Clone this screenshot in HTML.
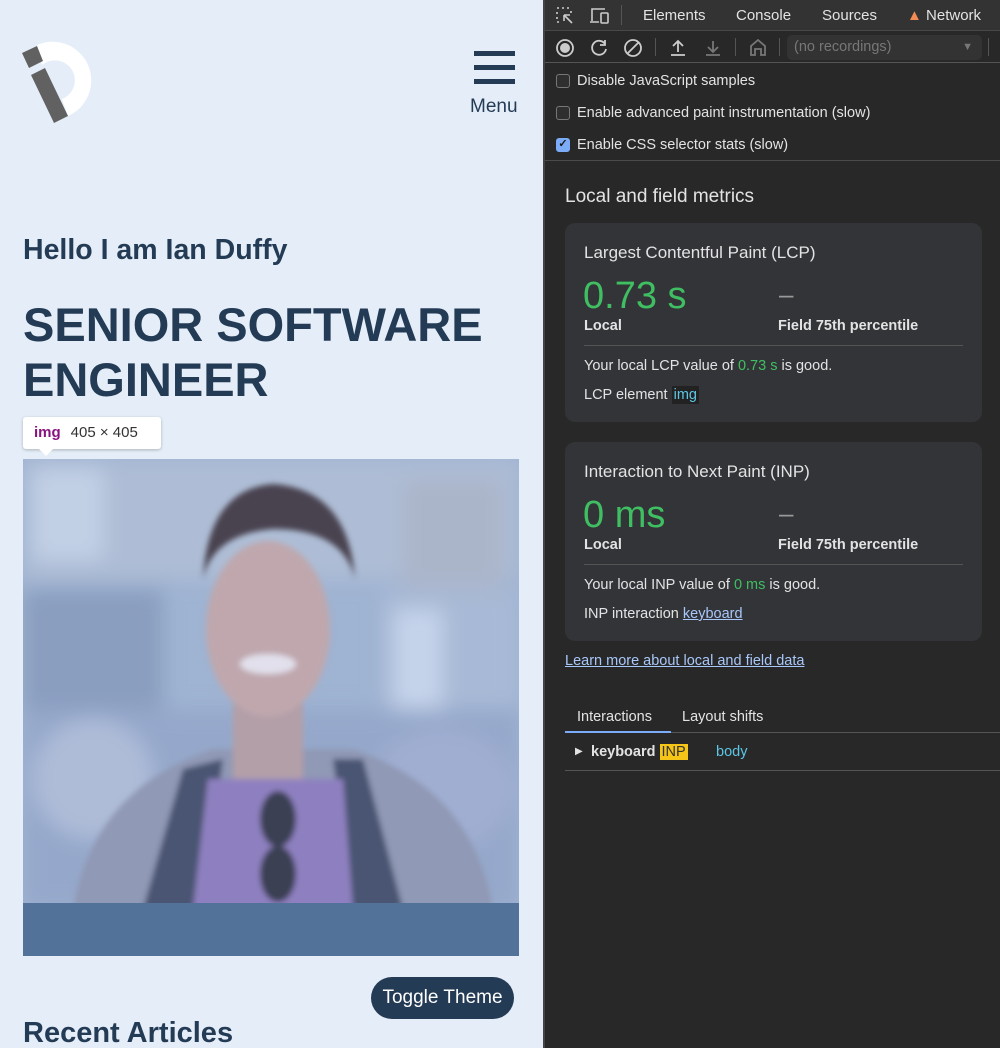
<!DOCTYPE html>
<html><head><meta charset="utf-8"><style>
*{margin:0;padding:0;box-sizing:border-box}
body{width:1000px;height:1048px;overflow:hidden;font-family:"Liberation Sans",sans-serif;position:relative;background:#282828}
.l{position:absolute;left:0;top:0;width:543px;height:1048px;background:#e5eef8;overflow:hidden;color:#243b55}
.a{position:absolute;white-space:nowrap}
.r{position:absolute;left:543px;top:0;width:457px;height:1048px;background:#282828;border-left:2px solid #444;color:#e3e3e3;font-size:14.5px}
.card{position:absolute;left:20px;width:417px;background:#333438;border-radius:10px}
.g{color:#3fbf62}
.cb{position:absolute;left:11px;width:14px;height:14px;border:1.5px solid #777;border-radius:3px;background:#2f2f2f}
</style></head><body>
<div class="l">
 <svg class="a" style="left:0;top:0" width="120" height="130" viewBox="0 0 120 130">
  <path d="M37,45 A38,38 0 1 1 68,116 L62,99 A20,20 0 1 0 42,65 Z" fill="#fff"/>
  <polygon points="22,53 37,46 43,61 29,68" fill="#616161"/>
  <polygon points="31,75 45,68 68,116 54,123" fill="#616161"/>
 </svg>
 <div class="a" style="left:474px;top:51px;width:41px;height:5px;background:#243b55"></div>
 <div class="a" style="left:474px;top:65px;width:41px;height:5px;background:#243b55"></div>
 <div class="a" style="left:474px;top:79px;width:41px;height:5px;background:#243b55"></div>
 <div class="a" style="left:470px;top:96px;font-size:19px">Menu</div>
 <div class="a" style="left:23px;top:234px;font-size:28.5px;font-weight:bold">Hello I am Ian Duffy</div>
 <div class="a" style="left:23px;top:297px;font-size:47px;font-weight:bold;line-height:55px">SENIOR SOFTWARE<br>ENGINEER</div>
 <svg class="a" style="left:23px;top:459px" width="496" height="497" viewBox="0 0 496 497">
  <defs><filter id="b"><feGaussianBlur stdDeviation="10"/></filter><filter id="s"><feGaussianBlur stdDeviation="3"/></filter></defs>
  <rect width="496" height="497" fill="#9fb3d2"/>
  <g filter="url(#b)">
  <rect x="0" y="0" width="496" height="120" fill="#aebdd5"/>
  <rect x="10" y="10" width="70" height="90" fill="#c2d0e6"/>
  <rect x="380" y="20" width="100" height="120" fill="#abb5ca"/>
  <rect x="0" y="130" width="140" height="120" fill="#8a9ec0"/>
  <rect x="360" y="130" width="136" height="150" fill="#a7b9d6"/>
  <rect x="370" y="150" width="50" height="110" fill="#c5d3ea"/>
  <rect x="0" y="250" width="496" height="200" fill="#95a8cb"/>
  <ellipse cx="70" cy="320" rx="60" ry="60" fill="#aebcd8"/>
  <ellipse cx="420" cy="330" rx="70" ry="60" fill="#a0aed2"/>
  </g>
  <g filter="url(#s)">
  <path d="M50 450 Q70 330 190 290 L330 290 Q450 330 470 450 Z" fill="#9099b5"/>
  <path d="M120 450 L160 310 L200 300 L180 450 Z" fill="#4a5572"/>
  <path d="M380 450 L340 300 L310 300 L330 450 Z" fill="#4a5572"/>
  <path d="M185 320 L320 320 L330 450 L170 450 Z" fill="#8e80c0"/>
  <rect x="210" y="240" width="70" height="80" fill="#b39fa8"/>
  <ellipse cx="245" cy="170" rx="62" ry="88" fill="#bfa7ad"/>
  <path d="M180 120 Q185 30 250 25 Q325 30 332 120 Q320 70 250 70 Q190 75 180 120Z" fill="#4a4250"/>
  <ellipse cx="245" cy="205" rx="28" ry="10" fill="#e2e0ec"/>
  <ellipse cx="255" cy="360" rx="18" ry="28" fill="#3a4052"/>
  <ellipse cx="255" cy="415" rx="18" ry="28" fill="#3a4052"/>
  </g>
  <rect x="0" y="444" width="496" height="53" fill="#52729a"/>
 </svg>
 <div class="a" style="left:23px;top:417px;width:138px;height:32px;background:#fff;border-radius:3px;box-shadow:0 1px 3px rgba(0,0,0,.25);font-size:15px;line-height:32px;padding-left:11px"><b style="color:#881280">img</b><span style="color:#333;margin-left:10px">405 × 405</span></div>
 <div class="a" style="left:38px;top:448px;width:0;height:0;border-left:8px solid transparent;border-right:8px solid transparent;border-top:8px solid #fff"></div>
 <div class="a" style="left:371px;top:977px;width:143px;height:42px;border-radius:21px;background:#243b55;color:#fff;font-size:19px;text-align:center;line-height:42px">Toggle Theme</div>
 <div class="a" style="left:23px;top:1017px;font-size:29px;font-weight:bold">Recent Articles</div>
</div>
<div class="r">
 <div style="position:absolute;left:0;top:0;width:457px;height:31px;background:#333;border-bottom:1px solid #494949"></div>
 <svg class="a" style="left:10px;top:6px" width="20" height="20" viewBox="0 0 20 20" fill="none" stroke="#ccc" stroke-width="1.6"><path d="M2 2h2M7 2h2M12 2h2M2 6v2M2 11v2M2 16h2M16 5v2" stroke-dasharray="2 2"/><path d="M9 9l8 8M9 9h6M9 9v6"/></svg>
 <svg class="a" style="left:44px;top:6px" width="22" height="20" viewBox="0 0 22 20" fill="none" stroke="#ccc" stroke-width="1.6"><path d="M3 15V3h13M1 16h9"/><rect x="12" y="7" width="7" height="10" rx="1"/></svg>
 <div class="a" style="left:76px;top:5px;width:1px;height:20px;background:#555"></div>
 <div class="a" style="left:98px;top:7px;font-size:15px">Elements</div>
 <div class="a" style="left:191px;top:7px;font-size:15px">Console</div>
 <div class="a" style="left:277px;top:7px;font-size:15px">Sources</div>
 <div class="a" style="left:362px;top:7px;font-size:15px"><span style="color:#f28b54">▲</span> Network</div>
 <div style="position:absolute;left:0;top:32px;width:457px;height:31px;background:#282828;border-bottom:1px solid #555"></div>
 <svg class="a" style="left:10px;top:38px" width="20" height="20"><circle cx="10" cy="10" r="8" fill="none" stroke="#ccc" stroke-width="1.8"/><circle cx="10" cy="10" r="5" fill="#ccc"/></svg>
 <svg class="a" style="left:44px;top:38px" width="20" height="20" fill="none" stroke="#ccc" stroke-width="1.8"><path d="M16 6A7 7 0 1 0 17 11"/><path d="M16 2v5h-5"/></svg>
 <svg class="a" style="left:78px;top:38px" width="20" height="20" fill="none" stroke="#ccc" stroke-width="1.8"><circle cx="10" cy="10" r="8"/><path d="M4 16L16 4"/></svg>
 <div class="a" style="left:110px;top:38px;width:1px;height:18px;background:#555"></div>
 <svg class="a" style="left:123px;top:38px" width="20" height="20" fill="none" stroke="#ccc" stroke-width="1.8"><path d="M10 14V3M5 8l5-5 5 5M3 17h14"/></svg>
 <svg class="a" style="left:158px;top:38px" width="20" height="20" fill="none" stroke="#777" stroke-width="1.8"><path d="M10 3v11M5 9l5 5 5-5M3 17h14"/></svg>
 <div class="a" style="left:190px;top:38px;width:1px;height:18px;background:#555"></div>
 <svg class="a" style="left:203px;top:38px" width="20" height="20" fill="none" stroke="#777" stroke-width="1.8"><path d="M3 17V8l7-6 7 6v9h-4v-6H7v6z"/></svg>
 <div class="a" style="left:234px;top:38px;width:1px;height:18px;background:#555"></div>
 <div class="a" style="left:242px;top:35px;width:195px;height:25px;background:#333;border-radius:5px;color:#777;font-size:14.5px;line-height:25px;padding-left:7px">(no recordings)<span style="position:absolute;right:9px;font-size:11px">▼</span></div>
 <div class="a" style="left:443px;top:38px;width:1px;height:18px;background:#555"></div>
 <div class="cb" style="top:74px"></div><div class="a" style="left:32px;top:73px">Disable JavaScript samples</div>
 <div class="cb" style="top:106px"></div><div class="a" style="left:32px;top:105px">Enable advanced paint instrumentation (slow)</div>
 <div class="cb" style="top:138px;background:#7cacf8;border-color:#7cacf8;color:#1a1a1a;font-size:11px;line-height:11px;text-align:center;font-weight:bold">✓</div><div class="a" style="left:32px;top:137px">Enable CSS selector stats (slow)</div>
 <div style="position:absolute;left:0;top:160px;width:457px;height:1px;background:#4a4a4a"></div>
 <div class="a" style="left:20px;top:186px;font-size:19px">Local and field metrics</div>
 <div class="card" style="top:223px;height:199px">
  <div class="a" style="left:19px;top:20px;font-size:17px">Largest Contentful Paint (LCP)</div>
  <div class="a g" style="left:18px;top:52px;font-size:38px">0.73 s</div>
  <div class="a" style="left:214px;top:56px;font-size:26px;color:#999">–</div>
  <div class="a" style="left:19px;top:95px;font-weight:bold;font-size:14.5px">Local</div>
  <div class="a" style="left:213px;top:95px;font-weight:bold;font-size:14.5px">Field 75th percentile</div>
  <div class="a" style="left:19px;top:122px;width:379px;height:1px;background:#555"></div>
  <div class="a" style="left:19px;top:135px">Your local LCP value of <span class="g">0.73 s</span> is good.</div>
  <div class="a" style="left:19px;top:164px">LCP element <span style="color:#5cc7e6;background:#222;padding:1px 2px">img</span></div>
 </div>
 <div class="card" style="top:442px;height:199px">
  <div class="a" style="left:19px;top:20px;font-size:17px">Interaction to Next Paint (INP)</div>
  <div class="a g" style="left:18px;top:52px;font-size:38px">0 ms</div>
  <div class="a" style="left:214px;top:56px;font-size:26px;color:#999">–</div>
  <div class="a" style="left:19px;top:95px;font-weight:bold;font-size:14.5px">Local</div>
  <div class="a" style="left:213px;top:95px;font-weight:bold;font-size:14.5px">Field 75th percentile</div>
  <div class="a" style="left:19px;top:122px;width:379px;height:1px;background:#555"></div>
  <div class="a" style="left:19px;top:135px">Your local INP value of <span class="g">0 ms</span> is good.</div>
  <div class="a" style="left:19px;top:164px">INP interaction <span style="color:#a8c7fa;text-decoration:underline">keyboard</span></div>
 </div>
 <div class="a" style="left:20px;top:653px;color:#a8c7fa;text-decoration:underline">Learn more about local and field data</div>
 <div class="a" style="left:32px;top:709px">Interactions</div>
 <div class="a" style="left:137px;top:709px">Layout shifts</div>
 <div class="a" style="left:20px;top:731px;width:106px;height:2px;background:#7cacf8"></div>
 <div class="a" style="left:126px;top:732px;width:331px;height:1px;background:#555"></div>
 <div class="a" style="left:30px;top:746px;font-size:10px">▶</div>
 <div class="a" style="left:46px;top:744px;font-weight:bold">keyboard <span style="background:#f5c518;color:#333;font-weight:normal;padding:0 2px">INP</span></div>
 <div class="a" style="left:171px;top:744px;color:#5cc7e6">body</div>
 <div class="a" style="left:20px;top:770px;width:437px;height:1px;background:#555"></div>
</div>
</body></html>
